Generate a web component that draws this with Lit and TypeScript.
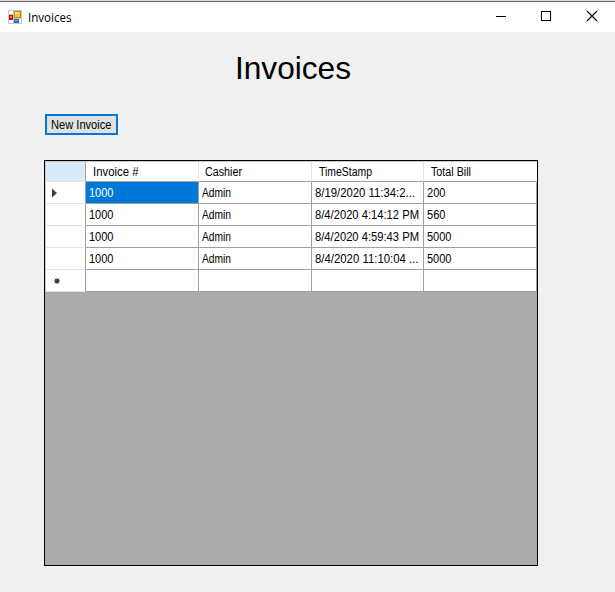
import { LitElement, html, svg, css } from "lit";
import { customElement, property } from "lit/decorators.js";

/** Single line of text, condensed to the given advance width. */
@customElement("fit-text")
class FitText extends LitElement {
  @property() text = "";
  @property({ type: Number }) width = 0;
  @property({ type: Number }) height = 16;
  @property({ type: Number }) baseline = 12;
  static styles = css`
    :host { display: block; flex: none; }
    svg { display: block; overflow: visible; }
    text { fill: currentColor; white-space: pre; }
  `;
  render() {
    return html`<svg width=${this.width} height=${this.height}>
      ${svg`<text x="0" y=${this.baseline} textLength=${this.width} lengthAdjust="spacingAndGlyphs">${this.text}</text>`}
    </svg>`;
  }
}

type Cell = [string, number];

@customElement("invoice-grid")
class InvoiceGrid extends LitElement {
  headers: Cell[] = [["Invoice #", 45.5], ["Cashier", 37], ["TimeStamp", 53], ["Total Bill", 40]];
  rows: Cell[][] = [
    [["1000", 24.5], ["Admin", 29], ["8/19/2020 11:34:2...", 100], ["200", 18.5]],
    [["1000", 24.5], ["Admin", 29], ["8/4/2020 4:14:12 PM", 104], ["560", 18.5]],
    [["1000", 24.5], ["Admin", 29], ["8/4/2020 4:59:43 PM", 104], ["5000", 24.5]],
    [["1000", 24.5], ["Admin", 29], ["8/4/2020 11:10:04 ...", 103.5], ["5000", 24.5]],
  ];
  static styles = css`
    :host { display: block; box-sizing: border-box; width: 494px; height: 406px; border: 1px solid #000; background: #ababab; font: 12px "Liberation Sans", Arial, sans-serif; color: #000; }
    .row { display: grid; grid-template-columns: 41px 113px 113px 112px 113px; height: 22px; }
    .head { height: 21px; box-sizing: border-box; border-top: 1px solid #c8c8c8; }
    .cell { box-sizing: border-box; background: #fff; border-right: 1px solid #a0a0a0; border-bottom: 1px solid #a0a0a0; padding: 3px 0 0 3px; }
    .head .cell { padding: 2px 0 0 7px; border-right-color: #e3e3e3; }
    .head .cell:nth-child(3) { padding-left: 6px; }
    .head .cell:last-child { border-right-color: #fff; }
    .cell.side, .head .cell.side { border-left: 1px solid #c8c8c8; border-bottom-color: #e3e3e3; padding: 0; display: flex; align-items: center; }
    .head .cell.side { background: #d9ebf9; border-right-color: #a0a0a0; border-bottom-color: #e3e3e3; }
    .selected { background: #0078d7; color: #fff; }
    svg { display: block; margin-left: 6px; }
  `;
  marker(kind: string) {
    if (kind === "arrow") return html`<svg width="6" height="10"><path d="M0 0.5V9.5L5 5Z" fill="#404040"/></svg>`;
    if (kind === "new") return html`<svg width="12" height="10" viewBox="0 0 12 10"><rect x="3" y="3" width="4" height="4" fill="#404040"/><path d="M5 2V8M2 5H8M2.7 2.7L7.3 7.3M7.3 2.7L2.7 7.3" stroke="#404040" stroke-width="1"/></svg>`;
    return "";
  }
  render() {
    return html`
      <div class="row head">
        <div class="cell side"></div>
        ${this.headers.map(([t, w]) => html`<div class="cell"><fit-text .text=${t} .width=${w}></fit-text></div>`)}
      </div>
      ${this.rows.map((r, i) => html`<div class="row">
        <div class="cell side">${this.marker(i === 0 ? "arrow" : "")}</div>
        ${r.map(([t, w], j) => html`<div class="cell ${i === 0 && j === 0 ? "selected" : ""}"><fit-text .text=${t} .width=${w}></fit-text></div>`)}
      </div>`)}
      <div class="row">
        <div class="cell side">${this.marker("new")}</div>
        ${this.headers.map(() => html`<div class="cell"></div>`)}
      </div>`;
  }
}

@customElement("app-root")
class AppRoot extends LitElement {
  static styles = css`
    :host { display: flex; flex-direction: column; box-sizing: border-box; width: 615px; height: 592px; background: #f0f0f0; border-top: 1px solid #d9d9d9; overflow: hidden; color: #000; }
    .bar { display: flex; align-items: center; box-sizing: border-box; height: 31px; flex: none; background: #fff; border-top: 1px solid #6b6b6b; padding-left: 8px; }
    .icon { display: block; margin-top: -1px; }
    .title { margin-left: 6px; font: 12px "Open Sans", "Noto Sans", sans-serif; }
    .controls { display: flex; margin-left: auto; }
    .controls svg { display: block; width: 45px; height: 30px; }
    .controls svg:last-child { width: 47px; }
    .body { display: flex; flex-direction: column; align-items: flex-start; padding-left: 44px; }
    .heading { margin: 17px 0 0 191px; font: 32px "Liberation Sans", Arial, sans-serif; }
    .button { display: flex; box-sizing: border-box; width: 73px; height: 21px; margin: 25px 0 25px 1px; padding: 1px 0 0 4px; border: 2px solid #0078d7; background: #e1e1e1; color: #000; font: 12px "Liberation Sans", Arial, sans-serif; border-radius: 0; }
  `;
  render() {
    return html`
      <div class="bar">
        <svg class="icon" width="14" height="14" viewBox="0 0 14 14">
          <path d="M0 0H14V14H0Z" fill="#c5c5c5"/>
          <path d="M1 1H5V4H1ZM1 10H5V13H1Z" fill="#fff"/>
          <path d="M6 9H13V13H6Z" fill="#fff"/>
          <rect x="1" y="5" width="4" height="5" fill="#b51212"/><rect x="2" y="6" width="2" height="2" fill="#ef7260"/>
          <rect x="6" y="1" width="7" height="7" fill="#c68a08"/><rect x="7" y="2" width="5" height="5" fill="#f8c93b"/><rect x="7" y="2" width="3" height="2" fill="#fde48a"/>
          <rect x="6" y="9" width="5" height="4" fill="#3567c4"/><rect x="7" y="10" width="3" height="1" fill="#82abf0"/>
        </svg>
        <fit-text class="title" .text=${"Invoices"} .width=${43.5} .baseline=${13}></fit-text>
        <div class="controls">
          <svg viewBox="0 0 45 30"><path d="M18 14.5H28" stroke="#000"/></svg>
          <svg viewBox="0 0 45 30"><rect x="18.5" y="9.5" width="9" height="9" fill="none" stroke="#000"/></svg>
          <svg viewBox="0 0 47 30"><path d="M19 9L29 19M29 9L19 19" stroke="#000" stroke-width="1.1"/></svg>
        </div>
      </div>
      <div class="body">
        <fit-text class="heading" .text=${"Invoices"} .width=${116} .height=${40} .baseline=${30}></fit-text>
        <button class="button"><fit-text .text=${"New Invoice"} .width=${60.5}></fit-text></button>
        <invoice-grid></invoice-grid>
      </div>`;
  }
}
